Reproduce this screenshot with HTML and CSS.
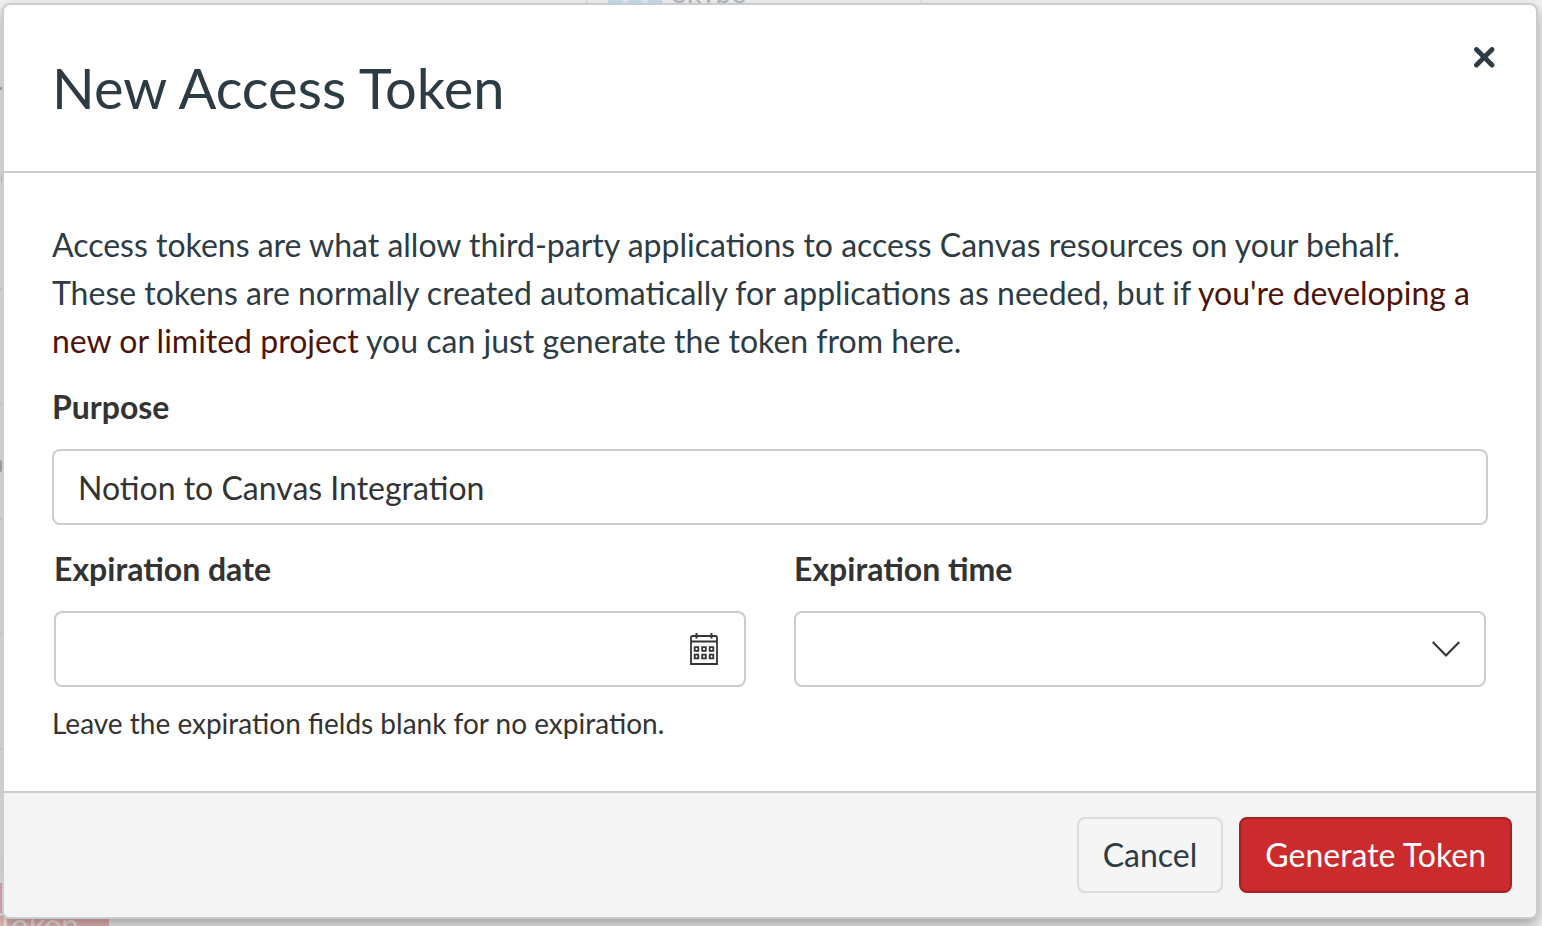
FILE: index.html
```html
<!DOCTYPE html>
<html lang="en">
<head>
<meta charset="utf-8">
<title>New Access Token</title>
<link rel="stylesheet" href="styles.css">
</head>
<body>
<div class="page-behind" aria-hidden="true">
  <div class="rows-behind"></div>
  <svg class="marks-behind" viewBox="0 0 4 400"><path d="M0 2H4V5H0ZM4 84Q0 91 2 98H4ZM0 375H1Q4 381 1 387H0Z" fill="#b4b4b4"/></svg>
  <div class="service">
    <span class="service-logo"></span>
    <span class="service-name">Skype</span>
  </div>
  <div class="behind-button"><span class="behind-button-text">Token</span></div>
</div>
<main class="dialog" role="dialog" aria-labelledby="dialog-title">
  <header class="dialog-header">
    <h1 class="dialog-title" id="dialog-title">New Access Token</h1>
    <button class="close" type="button" aria-label="Close">
      <svg class="close-icon" viewBox="0 0 22 22"><path d="M2.500 2.500 18 18M18 2.500 2.500 18" fill="none" stroke="currentColor" stroke-width="4.800" stroke-linecap="round"/></svg>
    </button>
  </header>
  <form class="dialog-form">
    <div class="dialog-body">
      <p class="intro">Access tokens are what allow third-party applications to access Canvas resources on your behalf. These tokens are normally created automatically for applications as needed, but if <a class="link" href="#">you're developing a new or limited project</a> you can just generate the token from here.</p>
      <div class="field">
        <label class="label" for="purpose">Purpose</label>
        <input class="control" id="purpose" type="text" value="Notion to Canvas Integration">
      </div>
      <div class="columns">
        <div class="field">
          <label class="label" for="date">Expiration date</label>
          <div class="control-wrap">
            <input class="control" id="date" type="text">
            <button class="calendar" type="button" aria-label="Choose a date">
              <svg class="calendar-icon" viewBox="0 0 28 32" fill="none" stroke="currentColor">
                <path d="M1 31V4.500Q1 3 2.500 3H25.500Q27 3 27 4.500V31ZM1 8.500H27" stroke-width="1.800"/>
                <path d="M6.500 0V5.500M21.500 0V5.500" stroke-width="2"/>
                <path d="M4.700 14.200H8.300V17.800H4.700ZM12.200 14.200H15.800V17.800H12.200ZM19.700 14.200H23.300V17.800H19.700ZM4.700 21.700H8.300V25.300H4.700ZM12.200 21.700H15.800V25.300H12.200ZM19.700 21.700H23.300V25.300H19.700Z" stroke-width="1.800"/>
              </svg>
            </button>
          </div>
        </div>
        <div class="field">
          <label class="label" for="time">Expiration time</label>
          <div class="control-wrap">
            <select class="control" id="time"><option></option></select>
            <svg class="chevron" viewBox="0 0 28 16"><path d="M.7 1 14 14.500 27.300 1" fill="none" stroke="currentColor" stroke-width="2.100"/></svg>
          </div>
        </div>
      </div>
      <p class="hint">Leave the expiration fields blank for no expiration.</p>
    </div>
    <footer class="dialog-footer">
      <button class="button" type="button">Cancel</button>
      <button class="button button-primary" type="submit">Generate Token</button>
    </footer>
  </form>
</main>
</body>
</html>
```
FILE: styles.css
```css
* { box-sizing: border-box; }

body {
  margin: 0;
  min-height: 100vh;
  padding: 3px 4px 7px 2px;
  overflow: hidden;
  background: #f2f2f2;
  color: #333;
  font: 32px/48px Lato, sans-serif;
}

.page-behind {
  position: absolute;
  inset: 0;
  overflow: hidden;
}

.rows-behind {
  position: absolute;
  left: 0;
  top: 175px;
  width: 4px;
  height: 692px;
  background: repeating-linear-gradient(transparent 0 113px, #e4e4e4 113px 115px);
}

.marks-behind {
  position: absolute;
  left: 0;
  top: 85px;
  width: 4px;
  height: 400px;
}

.service {
  position: absolute;
  left: 586px;
  top: -60px;
  width: 336px;
  height: 90px;
  border: solid #e2e2e2;
  border-width: 0 2px;
}

.service-logo {
  position: absolute;
  left: 20px;
  top: 20px;
  width: 54px;
  height: 44px;
  background: repeating-linear-gradient(90deg, #c7dfee 0 14px, #e4ebef 14px 20px);
}

.service-name {
  position: absolute;
  left: 84px;
  top: 28px;
  color: #b9bbbc;
  font-size: 28px;
}

.behind-button {
  position: absolute;
  left: -210px;
  bottom: -30px;
  width: 319px;
  height: 73px;
  background: #eab8b8;
}

.behind-button-text {
  position: absolute;
  right: 30px;
  top: 18px;
  color: #f4eaea;
  white-space: nowrap;
}

.dialog {
  position: relative;
  border: 2px solid #c7cdd1;
  border-radius: 8px;
  background: #fff;
  box-shadow: 0 6px 14px rgba(0, 0, 0, .34);
}

.dialog-header {
  display: flex;
  justify-content: space-between;
  align-items: flex-start;
  padding: 48px 40px 48px 48px;
  border-bottom: 2px solid #c7cdd1;
}

.dialog-title {
  margin: 0;
  color: #2d3b45;
  font-size: 56px;
  font-weight: 400;
  line-height: 70px;
}

.close {
  display: flex;
  margin-top: -6px;
  padding: 0;
  border: 0;
  background: none;
  color: #2d3b45;
}

.close-icon {
  width: 22px;
  height: 22px;
}

.dialog-body {
  display: flex;
  flex-direction: column;
  padding: 48px;
}

.intro {
  margin: 0 0 22px;
  color: #2d3b45;
}

.link {
  color: #4c1408;
  text-decoration: none;
}

.field {
  display: flex;
  flex-direction: column;
  gap: 22px;
}

.label {
  font-weight: 700;
  line-height: 40px;
}

.control {
  width: 100%;
  height: 76px;
  padding: 0 24px;
  border: 2px solid #c7cdd1;
  border-radius: 8px;
  background: #fff;
  color: #333;
  font: inherit;
  appearance: none;
}

.columns {
  display: grid;
  grid-template-columns: 1fr 1fr;
  gap: 48px;
  padding: 24px 2px 16px;
}

.control-wrap {
  position: relative;
  display: flex;
}

.calendar {
  position: absolute;
  right: 28px;
  top: 22px;
  display: flex;
  padding: 0;
  border: 0;
  background: none;
  color: #333;
}

.calendar-icon {
  width: 28px;
  height: 32px;
}

.chevron {
  position: absolute;
  right: 26px;
  top: 30px;
  width: 28px;
  height: 16px;
  color: #333;
  pointer-events: none;
}

.hint {
  margin: 0;
  font-size: 28px;
  line-height: 40px;
}

.dialog-footer {
  display: flex;
  justify-content: flex-end;
  gap: 16px;
  padding: 24px;
  border-top: 2px solid #c7cdd1;
  border-radius: 0 0 6px 6px;
  background: #f4f4f4;
}

.button {
  height: 76px;
  padding: 0 24px;
  border: 2px solid #dadbdc;
  border-radius: 8px;
  background: #f5f5f5;
  color: #2d3b45;
  font: inherit;
}

.button-primary {
  border-color: #a02327;
  background: #cc2b2d;
  color: #fff;
}
```
